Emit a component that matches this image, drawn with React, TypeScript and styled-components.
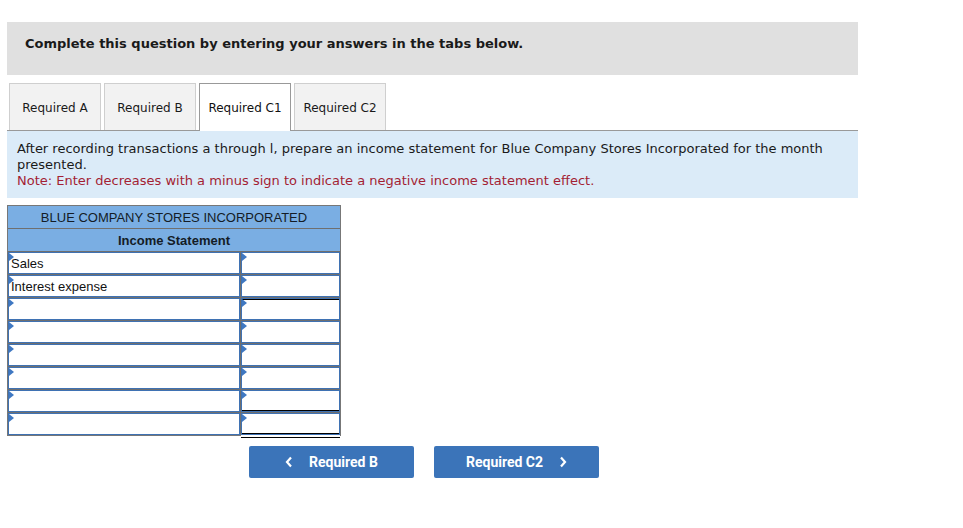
import styled, {createGlobalStyle} from 'styled-components'

const Global = createGlobalStyle`
    body {
        margin: 0;
        background: #ffffff;
        font-family: "DejaVu Sans", Verdana, sans-serif;
    }
`
const Page = styled.div`
    width: 851px;
    padding: 22px 0 0 7px;
`
const Banner = styled.div`
    height: 53px;
    box-sizing: border-box;
    background-color: #e0e0e0;
    padding: 14px 0 0 18px;
    font-size: 13px;
    font-weight: bold;
    color: #1a1a1a;
`
const TabBar = styled.div`
    display: flex;
    gap: 3px;
    margin-top: 8px;
    padding-left: 2px;
    border-bottom: 1px solid #999999;
`
const Tab = styled.div<{$active?: boolean}>`
    width: 92px;
    display: flex;
    align-items: center;
    justify-content: center;
    padding-top: 1px;
    box-sizing: border-box;
    font-size: 12px;
    color: ${p => p.$active ? '#111111' : '#1a1a1a'};
    background-color: ${p => p.$active ? '#ffffff' : '#f2f2f2'};
    border: 1px solid ${p => p.$active ? '#999999' : '#cfcfcf'};
    border-bottom: none;
    margin-bottom: ${p => p.$active ? '-1px' : '0'};
    height: ${p => p.$active ? '48px' : '47px'};
    padding-bottom: ${p => p.$active ? '1px' : '0'};
`
const Instructions = styled.div`
    background-color: #dbebf8;
    padding: 10px 10px 9px 10px;
    font-size: 13px;
    line-height: 16px;
    color: #1a1a1a;
`
const Note = styled.div`
    color: #a31f34;
`
const Table = styled.div`
    width: 332px;
    margin-top: 7px;
    border: 1px solid #777777;
    background-color: #6f6f6f;
    font-family: "Liberation Sans", Arial, sans-serif;
`
const TitleRow = styled.div<{$bold?: boolean}>`
    height: 22px;
    background-color: #7aaee3;
    display: flex;
    align-items: center;
    justify-content: center;
    font-size: 13px;
    font-weight: ${p => p.$bold ? 'bold' : 'normal'};
    color: #141c26;
    border-bottom: 1px solid #6f6f6f;
`
const Row = styled.div`
    display: grid;
    grid-template-columns: 232px 1fr;
    gap: 1px;
    height: 22px;
    margin-top: 1px;
    &:first-of-type {
        margin-top: 0;
    }
`
const Cell = styled.div<{$line?: 'top' | 'bottom' | 'double'}>`
    position: relative;
    background: #ffffff;
    border: 1px solid #3f72b3;
    font-size: 13px;
    color: #111111;
    padding: 3px 0 0 2px;
    box-shadow: ${p =>
        p.$line === 'top' ? 'inset 0 1px 0 #000000'
        : p.$line === 'bottom' ? 'inset 0 -1px 0 #000000'
        : p.$line === 'double' ? '0 2px 0 #ffffff, 0 3px 0 #000000, inset 0 -1px 0 #000000'
        : 'none'};
    &::before {
        content: '';
        position: absolute;
        left: 0;
        top: 0;
        border-left: 5px solid #3f78c2;
        border-top: 4px solid transparent;
        border-bottom: 4px solid transparent;
    }
`
const Rows = styled.div`
    display: flex;
    flex-direction: column;
`
const Nav = styled.div`
    display: flex;
    gap: 20px;
    margin: 10px 0 0 242px;
`
const NavButton = styled.button`
    width: 165px;
    height: 32px;
    border: none;
    border-radius: 2px;
    background-color: #3b74b9;
    color: #ffffff;
    font-family: Roboto, "Liberation Sans", sans-serif;
    font-size: 14px;
    font-weight: bold;
    display: flex;
    align-items: center;
    justify-content: center;
    gap: 16px;
    cursor: pointer;
`

const Chevron = ({dir}: {dir: 'left' | 'right'}) => (
    <svg width="8" height="12" viewBox="0 0 8 12">
        <path
            d={dir === 'left' ? 'M6 1.5 L2 6 L6 10.5' : 'M2 1.5 L6 6 L2 10.5'}
            fill="none"
            stroke="#ffffff"
            strokeWidth="2.2"
        />
    </svg>
)

const rows: {label: string, line?: 'top' | 'bottom' | 'double'}[] = [
    {label: 'Sales'},
    {label: 'Interest expense'},
    {label: '', line: 'top'},
    {label: ''},
    {label: ''},
    {label: ''},
    {label: '', line: 'bottom'},
    {label: '', line: 'double'},
]

export default function App() {
    return (
        <Page>
            <Global/>
            <Banner>Complete this question by entering your answers in the tabs below.</Banner>
            <TabBar>
                <Tab>Required A</Tab>
                <Tab>Required B</Tab>
                <Tab $active>Required C1</Tab>
                <Tab>Required C2</Tab>
            </TabBar>
            <Instructions>
                After recording transactions a through l, prepare an income statement for Blue Company Stores Incorporated for the month presented.
                <Note>Note: Enter decreases with a minus sign to indicate a negative income statement effect.</Note>
            </Instructions>
            <Table>
                <TitleRow>BLUE COMPANY STORES INCORPORATED</TitleRow>
                <TitleRow $bold>Income Statement</TitleRow>
                <Rows>
                    {rows.map((r, i) => (
                        <Row key={i}>
                            <Cell>{r.label}</Cell>
                            <Cell $line={r.line}/>
                        </Row>
                    ))}
                </Rows>
            </Table>
            <Nav>
                <NavButton><Chevron dir="left"/>Required B</NavButton>
                <NavButton>Required C2<Chevron dir="right"/></NavButton>
            </Nav>
        </Page>
    )
}
